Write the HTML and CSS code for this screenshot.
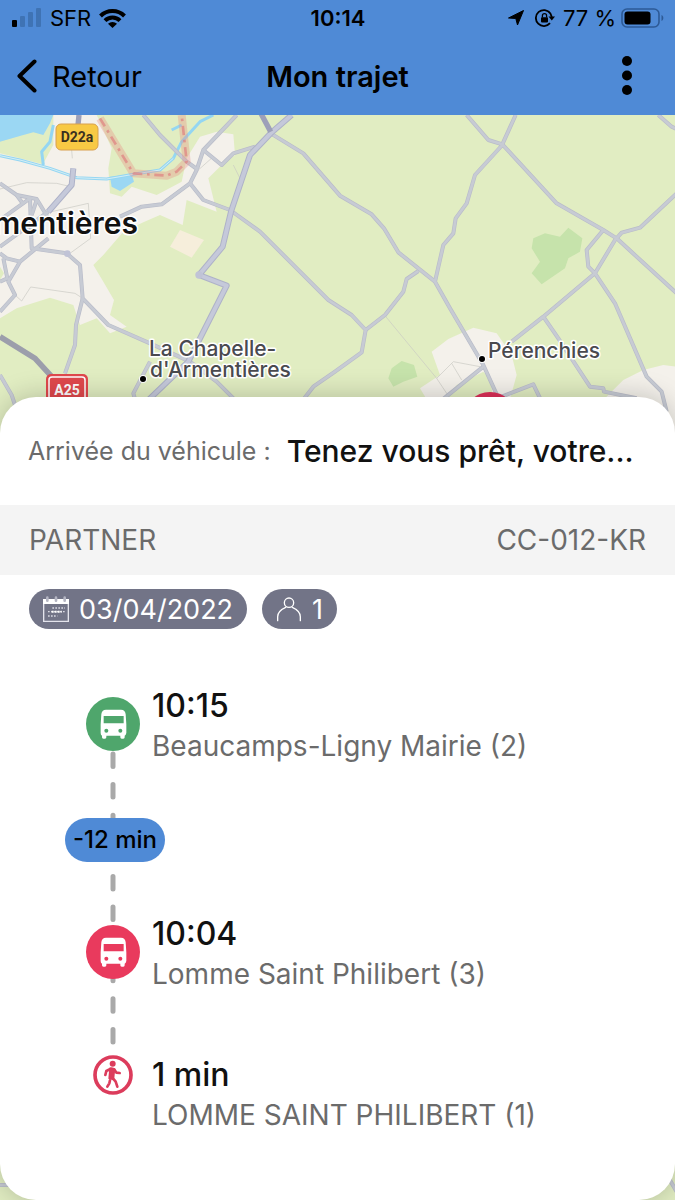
FILE: index.html
```html
<!DOCTYPE html>
<html lang="fr">
<head>
    <meta charset="UTF-8">
    <meta name="viewport" content="width=device-width, initial-scale=1.0">
    <title>Mon trajet</title>
    <link rel="stylesheet" href="styles.css">
</head>
<body>
    <header class="header">
        <div class="status-bar">
            <div class="status-left">
                <svg width="30" height="20" viewBox="0 0 30 20" aria-hidden="true">
                    <rect x="0" y="12" width="5" height="7" rx="1"/>
                    <g fill="#3f73b4">
                        <rect x="8" y="8" width="5" height="11" rx="1"/>
                        <rect x="16" y="4" width="5" height="15" rx="1"/>
                        <rect x="24" y="0" width="5" height="19" rx="1"/>
                    </g>
                </svg>
                <span>SFR</span>
                <svg width="27" height="20" viewBox="0 0 27 20" aria-hidden="true">
                    <g fill="none" stroke="#000" stroke-width="4">
                        <path d="M1.5 8a17 17 0 0 1 24 0"/>
                        <path d="M6 12.7a10.6 10.6 0 0 1 15 0"/>
                    </g>
                    <path d="M13.5 20 9 15.7a6.6 6.6 0 0 1 9 0z"/>
                </svg>
            </div>
            <strong class="clock">10:14</strong>
            <div class="status-right">
                <svg width="18" height="18" viewBox="0 0 18 18" aria-hidden="true"><path d="M16.500 1.500 10.500 16 8.800 9.500 1.500 9z" stroke="#000" stroke-linejoin="round"/></svg>
                <svg class="lock" width="20" height="18" viewBox="0 0 20 18" aria-hidden="true">
                    <path d="M15.4 4.4A8 8 0 1 0 15 14.2M13.5 2.600a8 8 0 0 1 3.300 5.400" fill="none" stroke="#000" stroke-width="1.8"/>
                    <path d="M13.5 7.5H20l-3.2 4z"/>
                    <rect x="6" y="8.2" width="7" height="5.3" rx="1"/>
                    <path d="M7.4 8.5V6.8a2.1 2.1 0 0 1 4.2 0v1.7" fill="none" stroke="#000" stroke-width="1.3"/>
                </svg>
                <span>77 %</span>
                <svg class="battery" width="43" height="20" viewBox="0 0 43 20" aria-hidden="true">
                    <rect x="1" y="1" width="37" height="18" rx="5" fill="none" stroke="#2d5a96" stroke-width="1.6"/>
                    <rect x="3.5" y="3.5" width="26" height="13" rx="3"/>
                    <path d="M40.5 7v6c2.4-1 2.4-5 0-6z" fill="#2d5a96"/>
                </svg>
            </div>
        </div>
        <nav class="nav-bar">
            <button class="back" type="button">
                <svg width="20" height="34" viewBox="0 0 20 34" aria-hidden="true"><path d="M17.5 2.5 2.5 17l15 14.5" fill="none" stroke="#000" stroke-width="4" stroke-linecap="round" stroke-linejoin="round"/></svg>
                Retour
            </button>
            <h1>Mon trajet</h1>
            <button class="more" type="button" aria-label="Menu">
                <svg width="10" height="40" viewBox="0 0 10 40" aria-hidden="true">
                    <circle cx="5" cy="5" r="5"/><circle cx="5" cy="19.5" r="5"/><circle cx="5" cy="34" r="5"/>
                </svg>
            </button>
        </nav>
    </header>

    <main class="content">
        <svg class="map" viewBox="0 0 675 1085" preserveAspectRatio="xMidYMin slice" aria-hidden="true">
            <defs>
                <g id="main-roads">
                    <path d="M875 0 812 55 750 120 693 290 668 395 597 480 680 512 600 670 565 740 440 860"/>
                    <path d="M220 160 215 210 145 290"/>
                </g>
                <g id="roads">
                    <path d="M0 205 50 240 110 252 145 310M0 315 90 250 95 400 200 415 240 450 248 550 325 630 450 685 570 740 650 800 710 860"/>
                    <path d="M145 290 0 395M145 370 60 440 25 500 45 540 0 590M0 415 20 430 60 440M10 430 22 490 0 500M50 240 70 268M110 255 95 300"/>
                    <path d="M248 550 228 630 225 690 195 775M0 780 35 840 45 870M450 740 400 835 410 870"/>
                    <path d="M360 305 425 275 485 268 570 205 590 165 610 105 710 0M430 0 480 60 560 140 595 165"/>
                    <path d="M610 105 665 150 700 115 765 95M570 205 610 255 690 285 780 350 985 555 1055 600 1097 645 1085 712 1005 770 940 815 905 860"/>
                    <path d="M1097 645 1155 600 1210 530 1220 492 1255 468M812 55 910 115 1020 242 1115 298 1152 340 1195 412 1305 500 1350 580 1450 750 1500 860"/>
                    <path d="M1305 500 1330 390 1360 355 1367 310 1400 265 1425 180 1507 90M1400 0 1465 75 1507 88 1670 265 1810 345 1850 370 2030 535M1547 0 1507 88"/>
                    <path d="M2030 235 1920 338 1865 353 1845 375 1785 475 1630 605 1535 680M1810 345 1760 405 1765 455 1785 475 1845 565 1940 785 1985 830 2000 890"/>
                    <path d="M1630 605 1675 670 1770 815 1810 820 1812 830 1910 850M1975 0 2015 35 2030 42M1450 755 1320 860M1505 845 1600 808 1625 860"/>
                    <path d="M0 3210 60 3210M1960 3110 2030 3230"/>
                </g>
            </defs>
            <rect width="675" height="1085" fill="#e1edc2"/>
            <!-- terrain and roads are drawn on a grid three times finer -->
            <g transform="scale(.33333)">
                <g class="urban">
                    <path d="M0 110 130 145 160 90V0H290L335 100 325 160 330 235 365 245 395 215 470 240 545 200 560 130 600 65 650 50 700 58 705 120 665 150 625 190 650 290 560 255 548 330 480 300 430 322 370 350 310 420 280 450 310 500 342 555 330 600 380 635 330 655 290 610 240 630 220 570 150 548 50 580 0 610z"/>
                    <path d="M1260 820 1320 780 1295 710 1345 672 1420 638 1490 655 1535 720 1550 780 1525 870H1290z"/>
                    <path d="M1815 850 1870 795 1930 765 1990 750 2030 755V960H1850z"/>
                </g>
                <path d="M1370 810 1450 770 1470 790 1480 850H1340z" fill="#e1edc2"/>
                <path class="field" d="M510 395 540 345 612 375 575 428z"/>
                <path d="M0 455 12 475 0 495z" fill="#e1edc2"/>
                <path class="water" d="M0 0H160L150 25 130 60 100 52 70 60 0 80z"/>
                <path d="M0 82 70 62 130 62 122 110 128 148 60 130 0 115z" fill="#e1edc2"/>
                <path class="water" d="M330 185 395 178 402 200 360 228 335 215z"/>
                <path class="river" d="M0 122 60 135 150 160 230 188 320 192 400 178 480 165 520 130 545 80 600 20 640 0M160 30 150 80 125 110 130 150M515 45 545 30"/>
                <path class="river-light" d="M0 122 60 135 150 160 230 188 320 192 400 178 480 165 520 130"/>
                <g class="woods">
                    <path d="M1600 370 1635 355 1680 365 1705 338 1747 370 1740 410 1705 430 1695 460 1625 508 1595 475 1620 440 1595 400z"/>
                    <path d="M1165 790 1175 760 1205 738 1242 750 1252 785 1210 800 1180 815z"/>
                </g>
                <path class="track" d="M0 222 80 203 170 205 212 215M155 290 265 265 272 370 210 415M45 540 65 558 92 516 225 535 248 550M217 130 215 105M1155 602 1310 790M1310 790 1360 740 1440 755M1355 745 1385 795M1310 790 1350 850M595 165 640 125M700 150 720 190"/>
                <use href="#roads" class="road-casing"/>
                <use href="#roads" class="road-fill"/>
                <use href="#main-roads" class="main-casing"/>
                <use href="#main-roads" class="main-fill"/>
                <circle cx="597" cy="480" r="11" fill="#c0c3d6"/>
                <circle cx="202" cy="416" r="10" fill="#c0c3d6"/>
                <path class="highway" d="M780 -10 812 50M237 0 234 30"/>
                <path class="motorway" d="M0 665 105 730 160 790"/>
                <path class="border-band" d="M300 10 400 175 500 182 530 170 560 140 545 0"/>
                <path class="border-line" d="M300 10 400 175 500 182 530 170 560 140 545 0"/>
            </g>
            <rect x="56" y="9" width="42" height="26" rx="5" fill="#f8c944" stroke="#d8a04e"/>
            <text class="road-ref" x="77" y="27">D22a</text>
            <rect x="46" y="259" width="42" height="40" rx="5" fill="#e0484c"/>
            <rect x="49" y="262" width="36" height="40" rx="3" fill="none" stroke="#fff" stroke-width="1.5"/>
            <text class="road-ref road-ref-red" x="67" y="280">A25</text>
            <text class="city" x="138" y="119">Armentières</text>
            <text class="village" x="149" y="241">La Chapelle-</text>
            <text class="village" x="150" y="262">d'Armentières</text>
            <text class="village" x="488" y="243">Pérenchies</text>
            <circle cx="143" cy="264" r="4" fill="#fff"/>
            <circle cx="143" cy="264" r="3"/>
            <circle cx="482" cy="244" r="4" fill="#fff"/>
            <circle cx="482" cy="244" r="3"/>
            <circle cx="490" cy="304" r="27" fill="#dc2f58"/>
        </svg>

        <section class="sheet">
            <div class="arrival">
                <span class="arrival-label">Arrivée du véhicule :</span>
                <strong class="arrival-text">Tenez vous prêt, votre...</strong>
            </div>
            <div class="vehicle">
                <span>PARTNER</span>
                <span>CC-012-KR</span>
            </div>
            <div class="chips">
                <span class="chip">
                    <svg width="26" height="26" viewBox="0 0 78 78" aria-hidden="true">
                        <path d="M2 11H76V76H2z" fill="none" stroke="#e4e4ec" stroke-width="4"/>
                        <path d="M0 9H78V24H0z" fill="#fff"/>
                        <path d="M13 5v9M39 5v9M65 5v9" stroke="#b4b5c2" stroke-width="8" stroke-linecap="round"/>
                        <path d="M28 36h38M15 47h52M15 60h28" stroke="#d9d9e2" stroke-width="4" stroke-dasharray="5 4"/>
                        <path d="M26 47h30" stroke="#fff" stroke-width="6" stroke-dasharray="6 3"/>
                    </svg>
                    03/04/2022
                </span>
                <span class="chip">
                    <svg width="26" height="26" viewBox="0 0 78 78" fill="none" stroke="#fff" stroke-width="4" aria-hidden="true">
                        <circle cx="39" cy="20" r="14"/>
                        <path d="M5 74V62C5 48 16 40 29 34M73 74V62C73 48 62 40 49 34" stroke-linecap="round"/>
                    </svg>
                    1
                </span>
            </div>

            <ol class="journey">
                <li class="stop">
                    <!-- dashed line running behind the stops -->
                    <svg class="journey-line" width="6" height="294" viewBox="0 0 6 294" aria-hidden="true">
                        <path d="M3 3V292" stroke="#a9a9a9" stroke-width="5" stroke-linecap="round" stroke-dasharray="12.5 18.1"/>
                    </svg>
                    <svg class="icon icon-bus icon-green" viewBox="0 0 162 162" aria-hidden="true">
                        <circle cx="81" cy="81" r="81"/>
                        <path fill="#fff" fill-rule="evenodd" d="M60 38H105Q118 38 119 52L121 82V108Q120 114 116 116V121Q116 125 112 125H107Q103 125 103 121V116H61V121Q61 125 57 125H52Q48 125 48 121V116Q44 114 44 108V82L46 52Q47 38 60 38zM53 57V79H113V57z"/>
                        <circle cx="61" cy="101" r="6"/><circle cx="103" cy="101" r="6"/>
                    </svg>
                    <div class="stop-text">
                        <strong>10:15</strong>
                        <span>Beaucamps-Ligny Mairie (2)</span>
                    </div>
                </li>
                <li class="delay">-12 min</li>
                <li class="stop">
                    <svg class="icon icon-bus icon-red" viewBox="0 0 162 162" aria-hidden="true">
                        <circle cx="81" cy="81" r="81"/>
                        <path fill="#fff" fill-rule="evenodd" d="M60 38H105Q118 38 119 52L121 82V108Q120 114 116 116V121Q116 125 112 125H107Q103 125 103 121V116H61V121Q61 125 57 125H52Q48 125 48 121V116Q44 114 44 108V82L46 52Q47 38 60 38zM53 57V79H113V57z"/>
                        <circle cx="61" cy="101" r="6"/><circle cx="103" cy="101" r="6"/>
                    </svg>
                    <div class="stop-text">
                        <strong>10:04</strong>
                        <span>Lomme Saint Philibert (3)</span>
                    </div>
                </li>
                <li class="stop stop-walk">
                    <svg class="icon icon-walk" viewBox="0 0 120 120" aria-hidden="true">
                        <circle cx="60" cy="60" r="54" fill="#fff" stroke="#dc3c5c" stroke-width="11"/>
                        <circle cx="59" cy="26" r="9" fill="#dc3c5c"/>
                        <g fill="none" stroke="#dc3c5c" stroke-width="8" stroke-linecap="round" stroke-linejoin="round">
                            <path d="M52 42 40 48 37 60M64 43 70 53 80 54"/>
                            <path d="M60 70 68 80 73 95M51 76 49 85 43 95"/>
                        </g>
                        <path d="M49 38Q60 34 67 42L64 68 60 76 46 71z" fill="#dc3c5c"/>
                    </svg>
                    <div class="stop-text">
                        <strong>1 min</strong>
                        <span>LOMME SAINT PHILIBERT (1)</span>
                    </div>
                </li>
            </ol>
        </section>
    </main>
</body>
</html>
```
FILE: styles.css
```css
* {
    box-sizing: border-box;
}
body {
    margin: 0;
    min-height: 100vh;
    display: flex;
    flex-direction: column;
    font-family: Inter, "Liberation Sans", sans-serif;
    color: #111;
    background-color: #e1edc2;
}
.header {
    background-color: #4f8ad6;
    color: #000;
    padding-bottom: 12px;
}
.status-bar {
    display: grid;
    grid-template-columns: 1fr auto 1fr;
    align-items: center;
    height: 36px;
    padding: 0 11px 0 12px;
    font-size: 22px;
}
.status-left,
.status-right {
    display: flex;
    align-items: center;
    gap: 8px;
}
.status-right {
    justify-content: flex-end;
}
.lock {
    margin-left: 2px;
}
.battery {
    margin-left: -3px;
}
.clock {
    font-weight: 600;
}
.nav-bar {
    display: grid;
    grid-template-columns: 1fr auto 1fr;
    align-items: center;
    height: 67px;
    padding: 13px 43px 0 17px;
}
.nav-bar h1 {
    margin: 0;
    padding-left: 26px;
    font-size: 29px;
    font-weight: 600;
}
.back,
.more {
    display: flex;
    align-items: center;
    padding: 0;
    border: none;
    background: none;
    color: inherit;
    font: inherit;
    cursor: pointer;
}
.back {
    gap: 15px;
    font-size: 29px;
}
.more {
    justify-self: end;
}
.content {
    flex: 1;
    position: relative;
    display: flex;
    flex-direction: column;
    padding-top: 282px;
    overflow: hidden;
}

/* map */
.map {
    position: absolute;
    top: 0;
    left: 0;
    width: 100%;
    height: 100%;
}
.urban {
    fill: #f4f1eb;
}
.field {
    fill: #f6eedb;
}
.woods {
    fill: #c6e3ab;
}
.water {
    fill: #9bd7f3;
}
.river,
.river-light,
.track,
.road-casing,
.road-fill,
.main-casing,
.main-fill,
.highway,
.motorway,
.border-band,
.border-line {
    fill: none;
    stroke-linejoin: round;
}
.river {
    stroke: #94d6f2;
    stroke-width: 9px;
}
.river-light {
    stroke: #d5eef5;
    stroke-width: 3px;
}
.track {
    stroke: #c8c8c2;
    stroke-width: 2px;
}
.road-casing {
    stroke: #b9bcc9;
    stroke-width: 12px;
}
.road-fill {
    stroke: #c7cbd4;
    stroke-width: 8px;
}
.main-casing {
    stroke: #aeb2c8;
    stroke-width: 18px;
}
.main-fill {
    stroke: #c5c9da;
    stroke-width: 12px;
}
.highway {
    stroke: #9da0b9;
    stroke-width: 16px;
}
.motorway {
    stroke: #9c9eab;
    stroke-width: 17px;
}
.border-band {
    stroke: #e88f83;
    stroke-width: 24px;
    opacity: 0.35;
}
.border-line {
    stroke: #df8583;
    stroke-width: 8px;
    stroke-dasharray: 28px 14px 8px 14px;
    opacity: 0.75;
}
.city,
.village {
    paint-order: stroke;
    stroke: #fff;
    stroke-width: 3px;
    stroke-linejoin: round;
}
.city {
    font-size: 30px;
    font-weight: 600;
    fill: #111;
    text-anchor: end;
}
.village {
    font-size: 21px;
    font-weight: 500;
    fill: #4a4a4f;
}
.road-ref {
    font-family: "Liberation Sans Narrow", Roboto, sans-serif;
    font-size: 14px;
    font-weight: 700;
    fill: #3a3020;
    text-anchor: middle;
}
.road-ref-red {
    fill: #fff;
}

/* bottom sheet */
.sheet {
    flex: 1;
    position: relative;
    padding-bottom: 65px;
    border-radius: 36px;
    background-color: #fff;
    box-shadow: 0 0 28px rgba(0, 0, 0, 0.22);
}
.arrival {
    display: flex;
    align-items: center;
    gap: 16px;
    height: 108px;
    padding: 0 28px;
}
.arrival-label {
    flex-shrink: 0;
    font-size: 25px;
    color: #6b6b6b;
}
.arrival-text {
    overflow: hidden;
    white-space: nowrap;
    text-overflow: ellipsis;
    font-size: 30px;
    font-weight: 500;
}
.vehicle {
    display: flex;
    justify-content: space-between;
    align-items: center;
    height: 70px;
    padding: 0 29px;
    background-color: #f4f4f4;
    font-size: 28px;
    color: #6b6b6b;
}
.chips {
    display: flex;
    gap: 15px;
    padding: 14px 29px 0;
}
.chip {
    display: flex;
    align-items: center;
    gap: 10px;
    height: 40px;
    padding: 0 14px;
    border-radius: 20px;
    background-color: #727487;
    color: #fff;
    font-size: 27px;
}

/* journey steps */
.journey {
    position: relative;
    display: flex;
    flex-direction: column;
    align-items: flex-start;
    gap: 52px;
    margin: 57px 0 0;
    padding: 0 29px 0 65px;
    list-style: none;
}
.journey-line {
    position: absolute;
    top: 65px;
    left: 110px;
}
.stop {
    display: flex;
    align-items: flex-start;
    gap: 12px;
    padding-left: 21px;
}
.stop-walk {
    margin-top: 9px;
}
.icon {
    position: relative;
    flex-shrink: 0;
}
.icon-bus {
    width: 54px;
    height: 54px;
    margin-top: 11px;
}
.icon-green {
    fill: #4fa66c;
}
.icon-red {
    fill: #e93a5d;
}
.icon-walk {
    width: 40px;
    height: 40px;
    margin: 0 7px;
}
.stop-text {
    display: flex;
    flex-direction: column;
    line-height: 40px;
}
.stop-text strong {
    font-size: 32px;
    font-weight: 500;
}
.stop-text span {
    font-size: 28px;
    color: #6b6b6b;
}
.delay {
    position: relative;
    padding: 0 8px;
    border-radius: 22px;
    background-color: #4f8ad6;
    color: #000;
    font-size: 24px;
    font-weight: 500;
    line-height: 44px;
}
```
